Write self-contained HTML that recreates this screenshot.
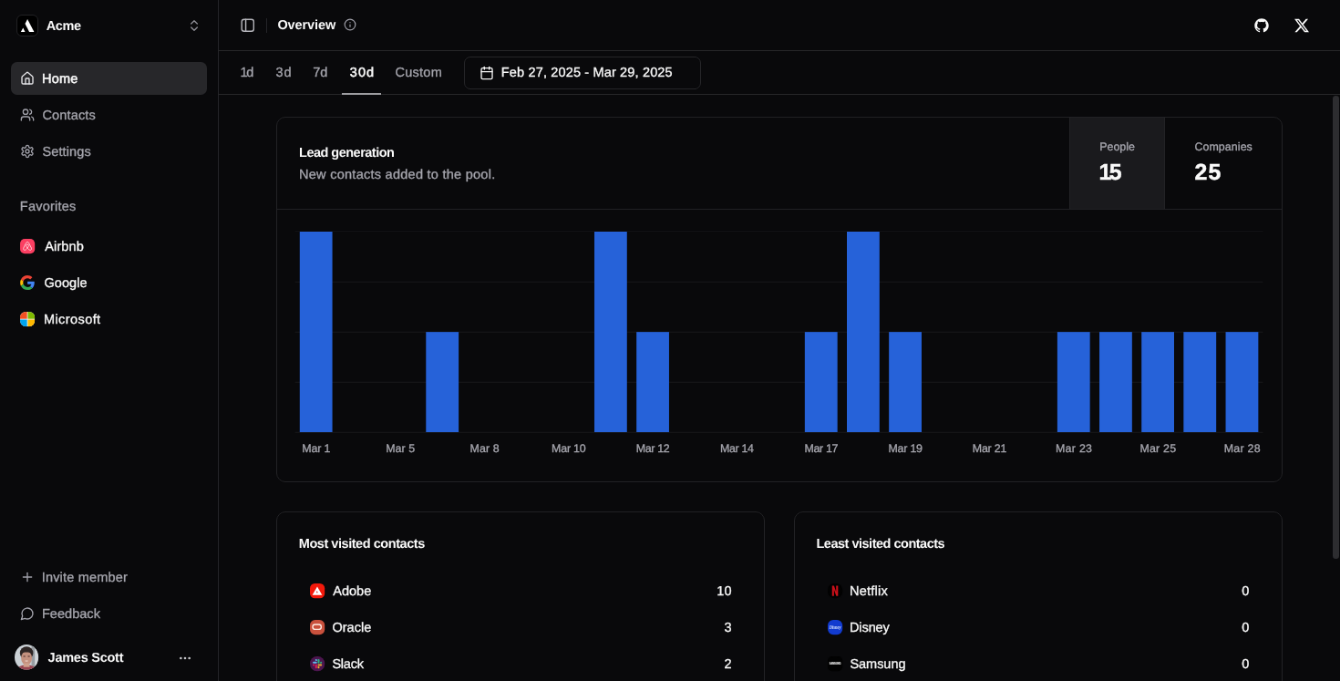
<!DOCTYPE html>
<html lang="en"><head><meta charset="utf-8"><title>Overview</title><style>
*{box-sizing:border-box}
html,body{margin:0;padding:0;background:#09090b;}
body{width:1340px;height:681px;overflow:hidden;font-family:"Liberation Sans", Arial, sans-serif;color:#fafafa;}
#app{position:absolute;left:0;top:0;width:1470px;height:747.100px;transform:scale(0.911565);transform-origin:0 0;overflow:hidden;will-change:transform}
.t{position:absolute;white-space:pre;-webkit-font-smoothing:antialiased;text-rendering:geometricPrecision}
.ic{position:absolute;display:block;overflow:visible}
.abs{position:absolute}
.sidebar{position:absolute;left:0;top:0;width:240px;height:748px;border-right:1px solid #27272a;}
.navitem{position:absolute;left:12px;width:215.400px;height:36px;border-radius:6.500px}
.navitem.active{background:#27272a}
.logo{position:absolute;left:18px;top:16px;width:24px;height:24px;border-radius:6px;background:#000;border:1px solid #242427;overflow:hidden}
.header{position:absolute;left:240px;top:0;width:1230px;height:56px;border-bottom:1px solid #27272a;}
.tabs{position:absolute;left:240px;top:56px;width:1230px;height:48px;border-bottom:1px solid #27272a;}
.sep{position:absolute;left:292px;top:20px;width:1px;height:16px;background:#27272a}
.underline{position:absolute;left:375px;top:101.900px;width:43px;height:2.100px;background:#9c9ca0}
.datebtn{position:absolute;left:509px;top:62px;width:260px;height:36px;border:1px solid #27272a;border-radius:7px}
.card{position:absolute;border:1px solid #232326;border-radius:10px;background:#09090b}
.chart{position:absolute;left:0;top:0;pointer-events:none}
.scroll{position:absolute;left:1462.100px;top:104.600px;width:7px;height:508.300px;border-radius:3.300px;background:#2d2d30}
</style></head><body>
<div id="app">
<aside class="sidebar">
  <div class="logo"><svg width="24" height="24" viewBox="0 0 24 24" style="position:absolute;left:-1px;top:-1px"><path d="M12.100 5.100 19.400 18.900H14.100L9.500 10.100Z" fill="#fff"/><path d="M7.300 14.500 9.500 18.900H4.800Z" fill="#fff"/></svg></div><span class="t" style="left:50.70px;top:18.87px;font-size:14.5px;line-height:20px;color:#fafafa;font-weight:700;letter-spacing:-0.350px;">Acme</span><svg class="ic" style="left:205px;top:20px" width="16" height="16" viewBox="0 0 24 24" fill="none" stroke="#8e8e96" stroke-width="2" stroke-linecap="round" stroke-linejoin="round"><path d="m7 15 5 5 5-5"/><path d="m7 9 5-5 5 5"/></svg>
  <nav>
    <div class="navitem active" style="top:68px"></div>
    <svg class="ic" style="left:22px;top:78px" width="16" height="16" viewBox="0 0 24 24" fill="none" stroke="#e4e4e7" stroke-width="2" stroke-linecap="round" stroke-linejoin="round"><path d="M15 21v-8a1 1 0 0 0-1-1h-4a1 1 0 0 0-1 1v8"/><path d="M3 10a2 2 0 0 1 .709-1.528l7-5.999a2 2 0 0 1 2.582 0l7 5.999A2 2 0 0 1 21 10v9a2 2 0 0 1-2 2H5a2 2 0 0 1-2-2z"/></svg><span class="t" style="left:45.95px;top:76.97px;font-size:14.5px;line-height:20px;color:#fafafa;letter-spacing:0.250px;-webkit-text-stroke:0.5px #fafafa;">Home</span>
    <svg class="ic" style="left:22px;top:118px" width="16" height="16" viewBox="0 0 24 24" fill="none" stroke="#a1a1aa" stroke-width="2" stroke-linecap="round" stroke-linejoin="round"><path d="M16 21v-2a4 4 0 0 0-4-4H6a4 4 0 0 0-4 4v2"/><circle cx="9" cy="7" r="4"/><path d="M22 21v-2a4 4 0 0 0-3-3.87"/><path d="M16 3.13a4 4 0 0 1 0 7.75"/></svg><span class="t" style="left:46.45px;top:116.67px;font-size:14.5px;line-height:20px;color:#a6a6ae;letter-spacing:0.157px;-webkit-text-stroke:0.32px #a6a6ae;">Contacts</span>
    <svg class="ic" style="left:22px;top:158px" width="16" height="16" viewBox="0 0 24 24" fill="none" stroke="#a1a1aa" stroke-width="2" stroke-linecap="round" stroke-linejoin="round"><path d="M12.22 2h-.44a2 2 0 0 0-2 2v.18a2 2 0 0 1-1 1.73l-.43.25a2 2 0 0 1-2 0l-.15-.08a2 2 0 0 0-2.73.73l-.22.38a2 2 0 0 0 .73 2.73l.15.1a2 2 0 0 1 1 1.72v.51a2 2 0 0 1-1 1.74l-.15.09a2 2 0 0 0-.73 2.73l.22.38a2 2 0 0 0 2.73.73l.15-.08a2 2 0 0 1 2 0l.43.25a2 2 0 0 1 1 1.73V20a2 2 0 0 0 2 2h.44a2 2 0 0 0 2-2v-.18a2 2 0 0 1 1-1.73l.43-.25a2 2 0 0 1 2 0l.15.08a2 2 0 0 0 2.73-.73l.22-.39a2 2 0 0 0-.73-2.73l-.15-.08a2 2 0 0 1-1-1.74v-.5a2 2 0 0 1 1-1.74l.15-.09a2 2 0 0 0 .73-2.73l-.22-.38a2 2 0 0 0-2.73-.73l-.15.08a2 2 0 0 1-2 0l-.43-.25a2 2 0 0 1-1-1.73V4a2 2 0 0 0-2-2z"/><circle cx="12" cy="12" r="3"/></svg><span class="t" style="left:46.45px;top:156.67px;font-size:14.5px;line-height:20px;color:#a6a6ae;letter-spacing:0.129px;-webkit-text-stroke:0.32px #a6a6ae;">Settings</span>
  </nav>
  <section>
    <span class="t" style="left:21.85px;top:217.17px;font-size:14.5px;line-height:20px;color:#a6a6ae;letter-spacing:0.219px;-webkit-text-stroke:0.32px #a6a6ae;">Favorites</span>
    <svg class="ic" style="left:21.95px;top:262.10px" width="16.2" height="16.2" viewBox="0 0 16 16"><rect width="16" height="16" rx="5" fill="#fb3f62"/><path d="M8 3.3c.75 0 1.15.5 1.55 1.3l2.65 5.3c.5 1.050.1 2.300-1.150 2.300-.950 0-1.750-.6-3.050-2.150-1.300 1.550-2.100 2.150-3.050 2.150-1.250 0-1.650-1.250-1.150-2.300l2.650-5.300C6.850 3.800 7.250 3.300 8 3.300Z" fill="none" stroke="#ffd3dc" stroke-width="0.9" stroke-linejoin="round"/><path d="M8 10.050c-.850-1.050-1.350-1.950-1.350-2.750 0-.8.600-1.350 1.350-1.350s1.350.550 1.350 1.350c0 .8-.5 1.700-1.350 2.750Z" fill="none" stroke="#ffd3dc" stroke-width="0.85"/></svg><span class="t" style="left:49.20px;top:260.87px;font-size:14.5px;line-height:20px;color:#fafafa;letter-spacing:0.150px;-webkit-text-stroke:0.32px #fafafa;">Airbnb</span>
    <svg class="ic" style="left:21.95px;top:302.00px" width="16.2" height="16.2" viewBox="0 0 16 16"><g transform="translate(0.1 0.1) scale(0.3292)"><path fill="#EA4335" d="M24 9.5c3.54 0 6.71 1.22 9.21 3.6l6.85-6.85C35.9 2.38 30.47 0 24 0 14.62 0 6.51 5.38 2.56 13.22l7.98 6.19C12.43 13.72 17.74 9.5 24 9.5z"/><path fill="#4285F4" d="M46.98 24.55c0-1.57-.15-3.09-.38-4.55H24v9.02h12.94c-.58 2.96-2.26 5.48-4.78 7.18l7.73 6c4.51-4.18 7.09-10.36 7.09-17.65z"/><path fill="#FBBC05" d="M10.53 28.59c-.48-1.45-.76-2.99-.76-4.59s.27-3.14.76-4.59l-7.98-6.19C.92 16.46 0 20.12 0 24c0 3.88.92 7.54 2.56 10.78l7.97-6.19z"/><path fill="#34A853" d="M24 48c6.48 0 11.93-2.13 15.89-5.81l-7.73-6c-2.15 1.45-4.92 2.3-8.16 2.3-6.26 0-11.57-4.22-13.47-9.91l-7.98 6.19C6.51 42.62 14.62 48 24 48z"/></g></svg><span class="t" style="left:48.45px;top:300.87px;font-size:14.5px;line-height:20px;color:#fafafa;letter-spacing:0.070px;-webkit-text-stroke:0.32px #fafafa;">Google</span>
    <svg class="ic" style="left:21.95px;top:341.95px" width="16.2" height="16.2" viewBox="0 0 16 16"><defs><clipPath id="msclip"><rect width="16" height="16" rx="6.3"/></clipPath></defs><g clip-path="url(#msclip)"><rect width="16" height="16" fill="#f3f3f3"/><rect x="0" y="0" width="7.6" height="7.6" fill="#f25022"/><rect x="8.4" y="0" width="7.6" height="7.6" fill="#7fba00"/><rect x="0" y="8.4" width="7.6" height="7.6" fill="#00a4ef"/><rect x="8.4" y="8.4" width="7.6" height="7.6" fill="#ffb900"/></g></svg><span class="t" style="left:47.95px;top:340.77px;font-size:14.5px;line-height:20px;color:#fafafa;letter-spacing:0.425px;-webkit-text-stroke:0.32px #fafafa;">Microsoft</span>
  </section>
  <footer>
    <svg class="ic" style="left:22px;top:625.4px" width="16" height="16" viewBox="0 0 24 24" fill="none" stroke="#a1a1aa" stroke-width="2" stroke-linecap="round" stroke-linejoin="round"><path d="M5 12h14"/><path d="M12 5v14"/></svg><span class="t" style="left:45.70px;top:624.27px;font-size:14.5px;line-height:20px;color:#a6a6ae;letter-spacing:0.183px;-webkit-text-stroke:0.32px #a6a6ae;">Invite member</span>
    <svg class="ic" style="left:22px;top:664.9px" width="16" height="16" viewBox="0 0 24 24" fill="none" stroke="#a1a1aa" stroke-width="2" stroke-linecap="round" stroke-linejoin="round"><path d="M7.9 20A9 9 0 1 0 4 16.1L2 22Z"/></svg><span class="t" style="left:45.95px;top:664.27px;font-size:14.5px;line-height:20px;color:#a6a6ae;letter-spacing:0.043px;-webkit-text-stroke:0.32px #a6a6ae;">Feedback</span>
    <svg class="ic" style="left:16px;top:706.800px" width="26.200" height="27.800" viewBox="0.500 0 27 28.400" preserveAspectRatio="none"><defs><clipPath id="avc"><ellipse cx="14" cy="14.200" rx="13.500" ry="14.200"/></clipPath></defs><g clip-path="url(#avc)"><rect width="28" height="28.400" fill="#cbd1d6"/><rect x="19.600" y="0" width="4" height="28.400" fill="#989da2"/><rect x="23.600" y="0" width="2.900" height="28.400" fill="#d4d7da"/><ellipse cx="14" cy="9.600" rx="7.500" ry="7.300" fill="#2e2625"/><ellipse cx="14" cy="15.200" rx="6.100" ry="7.700" fill="#c4917f"/><path d="M7.700 10C9 7 12 6 15 6.400c3 .4 4.800 1.800 5.400 4.300-2-1.700-4-2.200-6.400-2.100-2.500.1-4.400.4-6.300 1.400Z" fill="#2e2625"/><ellipse cx="11.500" cy="13.300" rx="1.400" ry="0.800" fill="#6a463f"/><ellipse cx="16.600" cy="13.300" rx="1.400" ry="0.800" fill="#6a463f"/><ellipse cx="14" cy="18.500" rx="2" ry="0.800" fill="#e6c3b6"/><ellipse cx="14" cy="28.400" rx="11" ry="5.600" fill="#9a4652"/><path d="M11.200 21h5.600l.9 4.200h-7.400z" fill="#cfa08c"/></g></svg><span class="t" style="left:52.60px;top:712.27px;font-size:14.5px;line-height:20px;color:#fafafa;font-weight:700;letter-spacing:-0.250px;">James Scott</span><svg class="ic" style="left:195px;top:713.6px" width="16" height="16" viewBox="0 0 24 24" fill="none" stroke="#c4c4c8" stroke-width="2" stroke-linecap="round" stroke-linejoin="round"><circle cx="12" cy="12" r="1"/><circle cx="19" cy="12" r="1"/><circle cx="5" cy="12" r="1"/></svg>
  </footer>
</aside>
<header class="header"></header>
<svg class="ic" style="left:262.75px;top:18.85px" width="17.5" height="17.5" viewBox="0 0 24 24" fill="none" stroke="#b4b4ba" stroke-width="2" stroke-linecap="round" stroke-linejoin="round"><rect width="18" height="18" x="3" y="3" rx="3.5"/><path d="M9 3v18"/></svg><div class="sep"></div><span class="t" style="left:304.45px;top:18.07px;font-size:14.5px;line-height:20px;color:#fafafa;font-weight:700;letter-spacing:-0.100px;">Overview</span><svg class="ic" style="left:377px;top:20.4px" width="14" height="14" viewBox="0 0 24 24" fill="none" stroke="#a1a1aa" stroke-width="2" stroke-linecap="round" stroke-linejoin="round"><circle cx="12" cy="12" r="10"/><path d="M12 16v-4"/><path d="M12 8h.01"/></svg>
<svg class="ic" style="left:1376.300px;top:20.050px" width="16" height="16" viewBox="0 0 15 15"><path fill="#fafafa" fill-rule="evenodd" clip-rule="evenodd" d="M7.49933 0.25C3.49635 0.25 0.25 3.49593 0.25 7.50024C0.25 10.703 2.32715 13.4206 5.2081 14.3797C5.57084 14.446 5.70302 14.2222 5.70302 14.0299C5.70302 13.8576 5.69679 13.4019 5.69323 12.797C3.67661 13.235 3.25112 11.825 3.25112 11.825C2.92132 10.9874 2.44599 10.7644 2.44599 10.7644C1.78773 10.3149 2.49584 10.3238 2.49584 10.3238C3.22353 10.375 3.60629 11.0711 3.60629 11.0711C4.25298 12.1788 5.30335 11.8588 5.71638 11.6732C5.78225 11.205 5.96962 10.8854 6.17658 10.7043C4.56675 10.5209 2.87415 9.89918 2.87415 7.12104C2.87415 6.32925 3.15677 5.68257 3.62053 5.17563C3.54576 4.99226 3.29697 4.25521 3.69174 3.25691C3.69174 3.25691 4.30015 3.06196 5.68522 3.99973C6.26337 3.83906 6.8838 3.75895 7.50022 3.75583C8.1162 3.75895 8.73619 3.83906 9.31523 3.99973C10.6994 3.06196 11.3069 3.25691 11.3069 3.25691C11.7026 4.25521 11.4538 4.99226 11.3795 5.17563C11.8441 5.68257 12.1245 6.32925 12.1245 7.12104C12.1245 9.9063 10.4292 10.5192 8.81452 10.6985C9.07444 10.9224 9.30633 11.3648 9.30633 12.0413C9.30633 13.0102 9.29742 13.7922 9.29742 14.0299C9.29742 14.2239 9.42828 14.4496 9.79591 14.3788C12.6746 13.4179 14.75 10.7025 14.75 7.50024C14.75 3.49593 11.5036 0.25 7.49933 0.25Z"/></svg><svg class="ic" style="left:1420px;top:19.950px" width="16" height="16" viewBox="0 0 24 24"><path fill="#fafafa" d="M18.901 1.153h3.68l-8.04 9.19L24 22.846h-7.406l-5.8-7.584-6.638 7.584H.474l8.6-9.83L0 1.154h7.594l5.243 6.932ZM17.61 20.644h2.039L6.486 3.24H4.298Z"/></svg>
<div class="tabs"></div>
<span class="t" style="left:263.45px;top:69.77px;font-size:14.5px;line-height:20px;color:#a6a6ae;letter-spacing:-1.300px;-webkit-text-stroke:0.32px #a6a6ae;">1d</span><span class="t" style="left:302.60px;top:69.77px;font-size:14.5px;line-height:20px;color:#a6a6ae;letter-spacing:0.850px;-webkit-text-stroke:0.32px #a6a6ae;">3d</span><span class="t" style="left:343.35px;top:69.77px;font-size:14.5px;line-height:20px;color:#a6a6ae;letter-spacing:-0.100px;-webkit-text-stroke:0.32px #a6a6ae;">7d</span><span class="t" style="left:383.70px;top:69.77px;font-size:14.5px;line-height:20px;color:#fafafa;letter-spacing:1.125px;-webkit-text-stroke:0.5px #fafafa;">30d</span><span class="t" style="left:433.55px;top:69.77px;font-size:14.5px;line-height:20px;color:#a6a6ae;letter-spacing:0.250px;-webkit-text-stroke:0.32px #a6a6ae;">Custom</span><div class="underline"></div>
<div class="datebtn"></div><svg class="ic" style="left:526px;top:71.6px" width="16" height="16" viewBox="0 0 24 24" fill="none" stroke="#fafafa" stroke-width="2" stroke-linecap="round" stroke-linejoin="round"><path d="M8 2v4"/><path d="M16 2v4"/><rect width="18" height="18" x="3" y="4" rx="2"/><path d="M3 10h18"/></svg><span class="t" style="left:549.85px;top:69.87px;font-size:14.5px;line-height:20px;color:#fafafa;letter-spacing:0.154px;-webkit-text-stroke:0.32px #fafafa;">Feb 27, 2025 - Mar 29, 2025</span>
<main>
  <section class="card" style="left:302.800px;top:128px;width:1104px;height:400.500px">
    <div class="abs" style="left:0;top:100.200px;width:1102px;height:1px;background:#232326"></div>
    <div class="abs" style="left:869.400px;top:0;width:105.300px;height:100.200px;background:#1a1a1d;border-left:1px solid #232326;border-right:1px solid #232326"></div>
  </section>
  <span class="t" style="left:328.05px;top:158.37px;font-size:14.5px;line-height:20px;color:#fafafa;font-weight:700;letter-spacing:-0.511px;">Lead generation</span><span class="t" style="left:328.05px;top:182.37px;font-size:14.5px;line-height:20px;color:#a6a6ae;letter-spacing:0.267px;-webkit-text-stroke:0.32px #a6a6ae;">New contacts added to the pool.</span><span class="t" style="left:1206.20px;top:152.70px;font-size:12.4px;line-height:17px;color:#a6a6ae;letter-spacing:0.040px;-webkit-text-stroke:0.32px #a6a6ae;">People</span><span class="t" style="left:1205.50px;top:171.50px;font-size:24.8px;line-height:35px;color:#fafafa;font-weight:700;letter-spacing:-2.600px;-webkit-text-stroke:0.5px #fafafa;">15</span><span class="t" style="left:1310.45px;top:152.70px;font-size:12.4px;line-height:17px;color:#a6a6ae;letter-spacing:0.087px;-webkit-text-stroke:0.32px #a6a6ae;">Companies</span><span class="t" style="left:1310.55px;top:171.50px;font-size:24.8px;line-height:35px;color:#fafafa;font-weight:700;letter-spacing:1.150px;-webkit-text-stroke:0.5px #fafafa;">25</span>
  <svg class="chart" width="1470" height="747" viewBox="0 0 1470 747"><g stroke="#1a1a1d" stroke-width="1" fill="none"><path d="M323.59 254.25H1385.53"/><path d="M323.59 309.25H1385.53"/><path d="M323.59 364.25H1385.53"/><path d="M323.59 419.25H1385.53"/><path d="M323.59 474.25H1385.53"/></g><g fill="#2662d9"><rect x="328.77" y="254.25" width="35.82" height="219.80"/><rect x="467.28" y="364.15" width="35.82" height="109.90"/><rect x="651.97" y="254.25" width="35.82" height="219.80"/><rect x="698.14" y="364.15" width="35.82" height="109.90"/><rect x="882.82" y="364.15" width="35.82" height="109.90"/><rect x="928.99" y="254.25" width="35.82" height="219.80"/><rect x="975.16" y="364.15" width="35.82" height="109.90"/><rect x="1159.85" y="364.15" width="35.82" height="109.90"/><rect x="1206.02" y="364.15" width="35.82" height="109.90"/><rect x="1252.19" y="364.15" width="35.82" height="109.90"/><rect x="1298.36" y="364.15" width="35.82" height="109.90"/><rect x="1344.53" y="364.15" width="35.82" height="109.90"/></g></svg>
  <span class="t" style="left:331.33px;top:483.80px;font-size:12.4px;line-height:17px;color:#a6a6ae;letter-spacing:-0.125px;-webkit-text-stroke:0.32px #a6a6ae;">Mar 1</span><span class="t" style="left:423.17px;top:483.80px;font-size:12.4px;line-height:17px;color:#a6a6ae;letter-spacing:0.062px;-webkit-text-stroke:0.32px #a6a6ae;">Mar 5</span><span class="t" style="left:515.51px;top:483.80px;font-size:12.4px;line-height:17px;color:#a6a6ae;letter-spacing:0.125px;-webkit-text-stroke:0.32px #a6a6ae;">Mar 8</span><span class="t" style="left:605.11px;top:483.80px;font-size:12.4px;line-height:17px;color:#a6a6ae;letter-spacing:-0.200px;-webkit-text-stroke:0.32px #a6a6ae;">Mar 10</span><span class="t" style="left:697.75px;top:483.80px;font-size:12.4px;line-height:17px;color:#a6a6ae;letter-spacing:-0.320px;-webkit-text-stroke:0.32px #a6a6ae;">Mar 12</span><span class="t" style="left:789.94px;top:483.80px;font-size:12.4px;line-height:17px;color:#a6a6ae;letter-spacing:-0.310px;-webkit-text-stroke:0.32px #a6a6ae;">Mar 14</span><span class="t" style="left:882.43px;top:483.80px;font-size:12.4px;line-height:17px;color:#a6a6ae;letter-spacing:-0.320px;-webkit-text-stroke:0.32px #a6a6ae;">Mar 17</span><span class="t" style="left:974.52px;top:483.80px;font-size:12.4px;line-height:17px;color:#a6a6ae;letter-spacing:-0.220px;-webkit-text-stroke:0.32px #a6a6ae;">Mar 19</span><span class="t" style="left:1066.72px;top:483.80px;font-size:12.4px;line-height:17px;color:#a6a6ae;letter-spacing:-0.160px;-webkit-text-stroke:0.32px #a6a6ae;">Mar 21</span><span class="t" style="left:1157.91px;top:483.80px;font-size:12.4px;line-height:17px;color:#a6a6ae;letter-spacing:0.300px;-webkit-text-stroke:0.32px #a6a6ae;">Mar 23</span><span class="t" style="left:1250.50px;top:483.80px;font-size:12.4px;line-height:17px;color:#a6a6ae;letter-spacing:0.200px;-webkit-text-stroke:0.32px #a6a6ae;">Mar 25</span><span class="t" style="left:1342.64px;top:483.80px;font-size:12.4px;line-height:17px;color:#a6a6ae;letter-spacing:0.280px;-webkit-text-stroke:0.32px #a6a6ae;">Mar 28</span>
  <section class="card" style="left:302.800px;top:561.200px;width:536.200px;height:260px"></section>
  <span class="t" style="left:327.75px;top:586.57px;font-size:14.5px;line-height:20px;color:#fafafa;font-weight:700;letter-spacing:-0.450px;">Most visited contacts</span>
  <svg class="ic" style="left:339.90px;top:640.00px" width="16.2" height="16.2" viewBox="0 0 16 16"><rect width="16" height="16" rx="5.2" fill="#f2190b"/><path d="M7.900 3.500 13.200 12.500H2.600Z" fill="#fff"/><path d="M7.600 7.900 8.700 10.100H6.800Z" fill="#d83a34"/></svg><span class="t" style="left:365.20px;top:639.17px;font-size:14.5px;line-height:20px;color:#fafafa;letter-spacing:0.037px;-webkit-text-stroke:0.32px #fafafa;">Adobe</span><span class="t" style="left:786.20px;top:639.17px;font-size:14.5px;line-height:20px;color:#fafafa;letter-spacing:0.150px;-webkit-text-stroke:0.3px #fafafa;">10</span>
  <svg class="ic" style="left:339.90px;top:680.20px" width="16.2" height="16.2" viewBox="0 0 16 16"><rect width="16" height="16" rx="5.6" fill="#c9513d"/><rect x="2.950" y="4.950" width="9.300" height="5.300" rx="2.650" fill="none" stroke="#ffece4" stroke-width="1.350"/></svg><span class="t" style="left:364.45px;top:679.17px;font-size:14.5px;line-height:20px;color:#fafafa;letter-spacing:0.030px;-webkit-text-stroke:0.32px #fafafa;">Oracle</span><span class="t" style="left:794.60px;top:679.17px;font-size:14.5px;line-height:20px;color:#fafafa;-webkit-text-stroke:0.3px #fafafa;">3</span>
  <svg class="ic" style="left:339.90px;top:720.20px" width="16.2" height="16.2" viewBox="0 0 16 16"><rect width="16" height="16" rx="7.400" fill="#4c164e"/><g transform="translate(3 2.900) scale(0.187)"><path fill="#62b8ee" d="M19.712.133a5.381 5.381 0 0 0-5.376 5.387 5.381 5.381 0 0 0 5.376 5.386h5.376V5.520A5.381 5.381 0 0 0 19.712.133m0 14.365H5.376A5.381 5.381 0 0 0 0 19.884a5.381 5.381 0 0 0 5.376 5.387h14.336a5.381 5.381 0 0 0 5.376-5.387 5.381 5.381 0 0 0-5.376-5.386"/><path fill="#2eb67d" d="M53.760 19.884a5.381 5.381 0 0 0-5.376-5.386 5.381 5.381 0 0 0-5.376 5.386v5.387h5.376a5.381 5.381 0 0 0 5.376-5.387m-14.336 0V5.520A5.381 5.381 0 0 0 34.048.133a5.381 5.381 0 0 0-5.376 5.387v14.364a5.381 5.381 0 0 0 5.376 5.387 5.381 5.381 0 0 0 5.376-5.387"/><path fill="#ecb22e" d="M34.048 54a5.381 5.381 0 0 0 5.376-5.387 5.381 5.381 0 0 0-5.376-5.386h-5.376v5.386A5.381 5.381 0 0 0 34.048 54m0-14.365h14.336a5.381 5.381 0 0 0 5.376-5.386 5.381 5.381 0 0 0-5.376-5.387H34.048a5.381 5.381 0 0 0-5.376 5.387 5.381 5.381 0 0 0 5.376 5.386"/><path fill="#e01e5a" d="M0 34.249a5.381 5.381 0 0 0 5.376 5.386 5.381 5.381 0 0 0 5.376-5.386v-5.387H5.376A5.381 5.381 0 0 0 0 34.250m14.336-.001v14.364A5.381 5.381 0 0 0 19.712 54a5.381 5.381 0 0 0 5.376-5.387V34.250a5.381 5.381 0 0 0-5.376-5.387 5.381 5.381 0 0 0-5.376 5.387"/></g></svg><span class="t" style="left:364.45px;top:718.57px;font-size:14.5px;line-height:20px;color:#fafafa;letter-spacing:-0.238px;-webkit-text-stroke:0.32px #fafafa;">Slack</span><span class="t" style="left:794.60px;top:718.57px;font-size:14.5px;line-height:20px;color:#fafafa;-webkit-text-stroke:0.3px #fafafa;">2</span>
  <section class="card" style="left:871px;top:561.200px;width:535.500px;height:260px"></section>
  <span class="t" style="left:895.45px;top:586.57px;font-size:14.5px;line-height:20px;color:#fafafa;font-weight:700;letter-spacing:-0.490px;">Least visited contacts</span>
  <svg class="ic" style="left:907.90px;top:640.00px" width="16.2" height="16.2" viewBox="0 0 16 16"><rect width="16" height="16" rx="7" fill="#020202"/><path d="M4.700 2.400h2.100l2.300 6.500V2.400h2.100v11.200H9.200L6.800 7v6.600H4.700Z" fill="#c8101a"/></svg><span class="t" style="left:931.95px;top:639.17px;font-size:14.5px;line-height:20px;color:#fafafa;letter-spacing:0.250px;-webkit-text-stroke:0.32px #fafafa;">Netflix</span><span class="t" style="left:1362.35px;top:639.17px;font-size:14.5px;line-height:20px;color:#fafafa;-webkit-text-stroke:0.3px #fafafa;">0</span>
  <svg class="ic" style="left:907.90px;top:680.20px" width="16.2" height="16.2" viewBox="0 0 16 16"><rect width="16" height="16" rx="6" fill="#123bcf"/><text x="8" y="10" text-anchor="middle" font-family="Liberation Serif, serif" font-style="italic" font-weight="700" font-size="5.400" textLength="12.600" lengthAdjust="spacingAndGlyphs" fill="#d5e2ff">Disney</text></svg><span class="t" style="left:931.95px;top:679.17px;font-size:14.5px;line-height:20px;color:#fafafa;letter-spacing:-0.080px;-webkit-text-stroke:0.32px #fafafa;">Disney</span><span class="t" style="left:1362.35px;top:679.17px;font-size:14.5px;line-height:20px;color:#fafafa;-webkit-text-stroke:0.3px #fafafa;">0</span>
  <svg class="ic" style="left:907.90px;top:720.20px" width="16.2" height="16.2" viewBox="0 0 16 16"><rect width="16" height="16" rx="4.800" fill="#020202"/><text x="8" y="8.950" text-anchor="middle" font-family="Liberation Sans, sans-serif" font-weight="700" font-size="2.800" textLength="12.600" lengthAdjust="spacingAndGlyphs" fill="#f2f2f2" stroke="#f2f2f2" stroke-width="0.100">SAMSUNG</text></svg><span class="t" style="left:932.45px;top:718.57px;font-size:14.5px;line-height:20px;color:#fafafa;letter-spacing:-0.033px;-webkit-text-stroke:0.32px #fafafa;">Samsung</span><span class="t" style="left:1362.35px;top:718.57px;font-size:14.5px;line-height:20px;color:#fafafa;-webkit-text-stroke:0.3px #fafafa;">0</span>
</main>
<div class="scroll"></div>
</div>
</body></html>
